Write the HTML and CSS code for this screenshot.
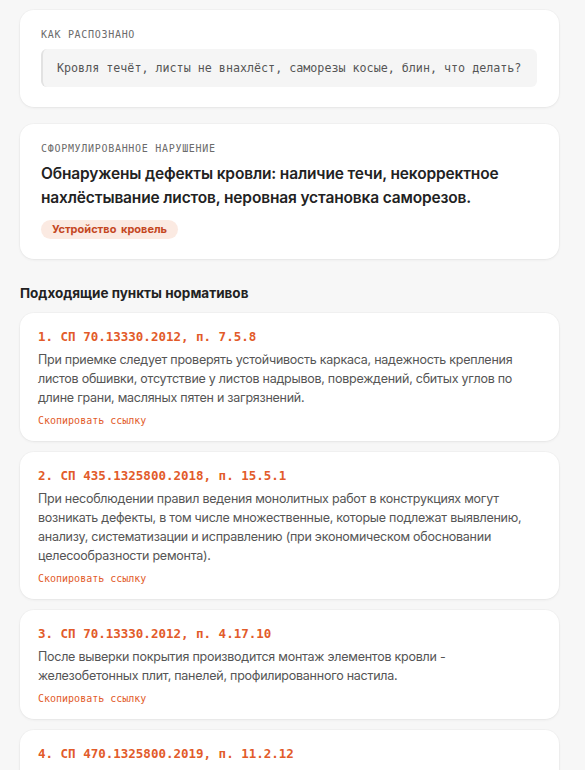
FILE: index.html
```html
<!DOCTYPE html>
<html lang="ru">
<head>
<meta charset="utf-8">
<link rel="stylesheet" href="styles.css">
</head>
<body>
<main class="page">
  <section class="card summary">
    <div class="label">КАК РАСПОЗНАНО</div>
    <div class="quote">Кровля течёт, листы не внахлёст, саморезы косые, блин, что делать?</div>
  </section>

  <section class="card summary violation">
    <div class="label">СФОРМУЛИРОВАННОЕ НАРУШЕНИЕ</div>
    <h2 class="violation-text">Обнаружены дефекты кровли: наличие течи, некорректное нахлёстывание листов, неровная установка саморезов.</h2>
    <span class="tag">Устройство кровель</span>
  </section>

  <h3 class="section-title">Подходящие пункты нормативов</h3>

  <div class="list">
    <article class="card item">
      <div class="item-title">1. СП 70.13330.2012, п. 7.5.8</div>
      <p class="item-text">При приемке следует проверять устойчивость каркаса, надежность крепления листов обшивки, отсутствие у листов надрывов, повреждений, сбитых углов по длине грани, масляных пятен и загрязнений.</p>
      <a class="copy">Скопировать ссылку</a>
    </article>
    <article class="card item">
      <div class="item-title">2. СП 435.1325800.2018, п. 15.5.1</div>
      <p class="item-text">При несоблюдении правил ведения монолитных работ в конструкциях могут возникать дефекты, в том числе множественные, которые подлежат выявлению, анализу, систематизации и исправлению (при экономическом обосновании целесообразности ремонта).</p>
      <a class="copy">Скопировать ссылку</a>
    </article>
    <article class="card item">
      <div class="item-title">3. СП 70.13330.2012, п. 4.17.10</div>
      <p class="item-text">После выверки покрытия производится монтаж элементов кровли - железобетонных плит, панелей, профилированного настила.</p>
      <a class="copy">Скопировать ссылку</a>
    </article>
    <article class="card item">
      <div class="item-title">4. СП 470.1325800.2019, п. 11.2.12</div>
      <p class="item-text">Покрытие кровли следует выполнять в соответствии с проектом, с обеспечением герметичности стыков и примыканий.</p>
      <a class="copy">Скопировать ссылку</a>
    </article>
  </div>
</main>
</body>
</html>
```

FILE: styles.css
```css
html, body {
  margin: 0;
  padding: 0;
  background: #f7f7f7;
}
body {
  font-family: Inter, "Noto Sans", sans-serif;
  color: #222;
}
.page {
  width: 539px;
  margin-left: 20px;
  padding-top: 10px;
}
.card {
  background: #fff;
  border-radius: 14px;
  box-shadow: 0 1px 3px rgba(0, 0, 0, 0.06), 0 0 0 1px rgba(0, 0, 0, 0.02);
}
.summary {
  padding: 20px 22px 20px 21px;
  margin-bottom: 17px;
}
.violation {
  display: flex;
  flex-direction: column;
  align-items: flex-start;
}
.label {
  font-family: "DejaVu Sans Mono", "Liberation Mono", monospace;
  font-size: 10px;
  line-height: 10px;
  letter-spacing: 0.7px;
  color: #6b6b6b;
}
.quote {
  margin-top: 9px;
  background: #f5f5f5;
  border-left: 2px solid #e2e2e2;
  border-radius: 6px;
  padding: 10px 14px 10px 14px;
  font-family: "DejaVu Sans Mono", "Liberation Mono", monospace;
  font-size: 11.7px;
  line-height: 18px;
  color: #555;
}
.violation-text {
  margin: 8px 0 10px 0;
  font-size: 15.5px;
  line-height: 24px;
  font-weight: 600;
  letter-spacing: -0.15px;
  color: #222;
}
.tag {
  display: block;
  background: #fbeae2;
  color: #c4471f;
  font-size: 11px;
  font-weight: 700;
  line-height: 19px;
  padding: 0 11px;
  border-radius: 10px;
  word-spacing: 2px;
}
.section-title {
  margin: 24px 0 10px 0;
  font-size: 13.5px;
  line-height: 20px;
  font-weight: 700;
  color: #222;
}
.list {
  display: flex;
  flex-direction: column;
  gap: 11px;
}
.item {
  padding: 15px 18px 13px 18px;
}
.item-title {
  font-family: "DejaVu Sans Mono", "Liberation Mono", monospace;
  font-size: 12.5px;
  line-height: 18px;
  font-weight: 700;
  color: #e25b2a;
}
.item-text {
  margin: 3.5px 0 7.5px 0;
  font-size: 12.5px;
  line-height: 19px;
  letter-spacing: -0.25px;
  color: #555;
}
.copy {
  display: block;
  font-family: "DejaVu Sans Mono", "Liberation Mono", monospace;
  font-size: 10px;
  line-height: 14px;
  color: #e25b2a;
  cursor: pointer;
}
```
